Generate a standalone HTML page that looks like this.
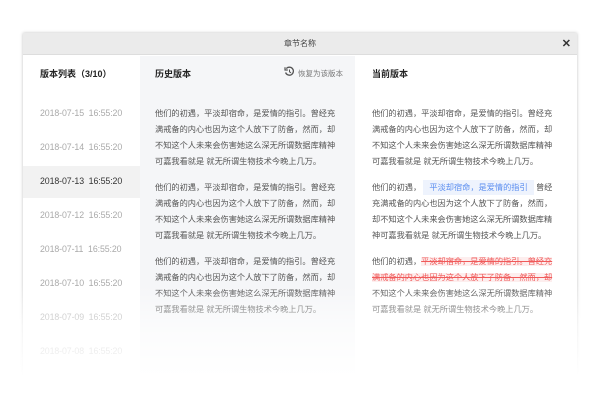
<!DOCTYPE html>
<html><head><meta charset="utf-8"><style>
*{margin:0;padding:0;box-sizing:border-box}
body{width:600px;height:400px;background:#fff;position:relative;overflow:hidden;font-family:"Liberation Sans","Noto Sans CJK SC",sans-serif}
.win{position:absolute;left:23px;top:33px;width:554px;height:345px;background:#fff;box-shadow:0 0 3px rgba(0,0,0,.25)}
.hd{position:absolute;left:0;top:0;width:554px;height:22px;background:#ebebeb;border-bottom:1px solid #ddd;text-align:center;font-size:8px;line-height:22px;color:#444}
.x{position:absolute;right:6px;top:1px;font-size:11px;font-weight:bold;color:#333;line-height:20px}
.a{position:absolute;white-space:nowrap}
.t{font-size:9px;font-weight:bold;color:#222}
.d{font-size:8.8px;color:#aaa;left:17px;letter-spacing:-.1px}
.mid{position:absolute;left:117px;top:23px;width:215px;height:322px;background:#f5f6f8}
.p{font-size:8.2px;line-height:16px;color:#555}
.hl{background:#eef3fd;color:#5b8ef0;padding:3px 6px}
.del{background:#fdeeee;color:#f05a5a;text-decoration:line-through}
.fade{position:absolute;left:0;top:285px;width:600px;height:115px;background:linear-gradient(rgba(255,255,255,0),rgba(255,255,255,.6) 35%,#fff 80%)}
</style></head><body>
<div class="win">
<div class="hd">章节名称<span class="x">✕</span></div>
<div class="a" style="left:0;top:133px;width:117px;height:32px;background:#f2f2f2"></div>
<div class="mid"></div>
<div class="a t" style="left:17px;top:34px">版本列表（3/10）</div>
<div class="a d" style="top:75px">2018-07-15&nbsp; 16:55:20</div>
<div class="a d" style="top:109px">2018-07-14&nbsp; 16:55:20</div>
<div class="a d" style="top:143px;color:#333">2018-07-13&nbsp; 16:55:20</div>
<div class="a d" style="top:177px">2018-07-12&nbsp; 16:55:20</div>
<div class="a d" style="top:211px">2018-07-11&nbsp; 16:55:20</div>
<div class="a d" style="top:245px">2018-07-10&nbsp; 16:55:20</div>
<div class="a d" style="top:279px">2018-07-09&nbsp; 16:55:20</div>
<div class="a d" style="top:313px">2018-07-08&nbsp; 16:55:20</div>
<div class="a d" style="top:347px">2018-07-07&nbsp; 16:55:20</div>
<div class="a t" style="left:132px;top:34px">历史版本</div>
<svg class="a" style="left:261px;top:33px" width="11" height="11" viewBox="0 0 11 11"><path d="M2.3 2.6A4 4 0 1 1 1.6 6.5" fill="none" stroke="#555" stroke-width="1.3"/><path d="M1 1.2v2.8h2.8" fill="none" stroke="#555" stroke-width="1.2"/><path d="M5.5 3.5v2.3l1.5 1" fill="none" stroke="#555" stroke-width="1"/></svg>
<div class="a" style="left:275px;top:35px;font-size:7.5px;color:#777">恢复为该版本</div>
<div class="a p" style="left:132px;top:73px">他们的初遇，平淡却宿命，是爱情的指引。曾经充<br>满戒备的内心也因为这个人放下了防备，然而，却<br>不知这个人未来会伤害她这么深无所谓数据库精神<br>可嘉我看就是 就无所谓生物技术今晚上几万。</div>
<div class="a p" style="left:132px;top:147px">他们的初遇，平淡却宿命，是爱情的指引。曾经充<br>满戒备的内心也因为这个人放下了防备，然而，却<br>不知这个人未来会伤害她这么深无所谓数据库精神<br>可嘉我看就是 就无所谓生物技术今晚上几万。</div>
<div class="a p" style="left:132px;top:221px">他们的初遇，平淡却宿命，是爱情的指引。曾经充<br>满戒备的内心也因为这个人放下了防备，然而，却<br>不知这个人未来会伤害她这么深无所谓数据库精神<br>可嘉我看就是 就无所谓生物技术今晚上几万。</div>
<div class="a t" style="left:349px;top:34px">当前版本</div>
<div class="a p" style="left:349px;top:73px">他们的初遇，平淡却宿命，是爱情的指引。曾经充<br>满戒备的内心也因为这个人放下了防备，然而，却<br>不知这个人未来会伤害她这么深无所谓数据库精神<br>可嘉我看就是 就无所谓生物技术今晚上几万。</div>
<div class="a p" style="left:349px;top:147px">他们的初遇， <span class="hl">平淡却宿命，是爱情的指引</span> 曾经<br>充满戒备的内心也因为这个人放下了防备，然而，<br>却不知这个人未来会伤害她这么深无所谓数据库精<br>神可嘉我看就是 就无所谓生物技术今晚上几万。</div>
<div class="a p" style="left:349px;top:221px">他们的初遇，<span class="del">平淡却宿命，是爱情的指引。曾经充</span><br><span class="del">满戒备的内心也因为这个人放下了防备，然而，却</span><br>不知这个人未来会伤害她这么深无所谓数据库精神<br>可嘉我看就是 就无所谓生物技术今晚上几万。</div>
</div>
<div class="fade"></div>
</body></html>
